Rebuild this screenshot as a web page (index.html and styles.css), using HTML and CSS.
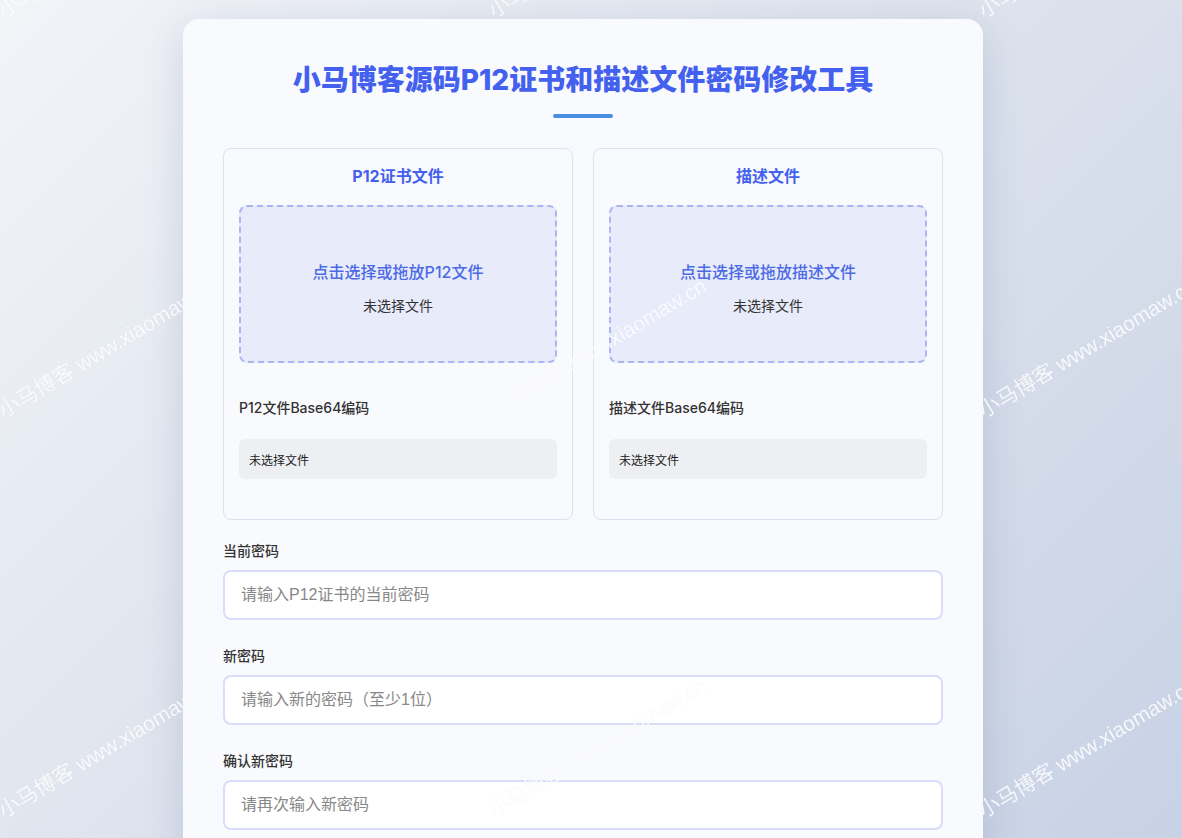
FILE: index.html
```html
<!DOCTYPE html>
<html lang="zh-CN">
<head>
    <meta charset="UTF-8">
    <meta name="viewport" content="width=device-width, initial-scale=1.0">
    <title>小马博客源码P12证书和描述文件密码修改工具</title>
    <link rel="stylesheet" href="styles.css">
</head>
<body>
    <div class="container">
        <h1>小马博客源码P12证书和描述文件密码修改工具</h1>
        <div class="title-bar"></div>

        <div class="file-row">
            <div class="file-card">
                <h3>P12证书文件</h3>
                <label class="drop-zone">
                    <input type="file" accept=".p12">
                    <span class="drop-text">点击选择或拖放P12文件</span>
                    <span class="file-name">未选择文件</span>
                </label>
                <div class="b64-label">P12文件Base64编码</div>
                <div class="b64-box">未选择文件</div>
            </div>
            <div class="file-card">
                <h3>描述文件</h3>
                <label class="drop-zone">
                    <input type="file" accept=".mobileprovision">
                    <span class="drop-text">点击选择或拖放描述文件</span>
                    <span class="file-name">未选择文件</span>
                </label>
                <div class="b64-label">描述文件Base64编码</div>
                <div class="b64-box">未选择文件</div>
            </div>
        </div>

        <div class="form-group">
            <label for="old-pass">当前密码</label>
            <input type="password" id="old-pass" placeholder="请输入P12证书的当前密码">
        </div>
        <div class="form-group">
            <label for="new-pass">新密码</label>
            <input type="password" id="new-pass" placeholder="请输入新的密码（至少1位）">
        </div>
        <div class="form-group">
            <label for="confirm-pass">确认新密码</label>
            <input type="password" id="confirm-pass" placeholder="请再次输入新密码">
        </div>

        <button id="submit-btn">修改密码并下载</button>
        <p id="message"></p>
    </div>

    <div class="watermark">
        <div class="wm-cell"><span>小马博客 www.xiaomaw.cn</span></div>
        <div class="wm-cell"><span>小马博客 www.xiaomaw.cn</span></div>
        <div class="wm-cell"><span>小马博客 www.xiaomaw.cn</span></div>
        <div class="wm-cell"><span>小马博客 www.xiaomaw.cn</span></div>
        <div class="wm-cell"><span>小马博客 www.xiaomaw.cn</span></div>
        <div class="wm-cell"><span>小马博客 www.xiaomaw.cn</span></div>
        <div class="wm-cell"><span>小马博客 www.xiaomaw.cn</span></div>
        <div class="wm-cell"><span>小马博客 www.xiaomaw.cn</span></div>
        <div class="wm-cell"><span>小马博客 www.xiaomaw.cn</span></div>
        <div class="wm-cell"><span>小马博客 www.xiaomaw.cn</span></div>
        <div class="wm-cell"><span>小马博客 www.xiaomaw.cn</span></div>
        <div class="wm-cell"><span>小马博客 www.xiaomaw.cn</span></div>
    </div>
</body>
</html>
```

FILE: styles.css
```css
body {
    font-family: Inter, "Noto Sans CJK SC", sans-serif;
    margin: 0;
    /* leaves room the width of a scrollbar on the right */
    padding: 19px 16px 40px 0;
    color: #333;
    background: linear-gradient(135deg, #f2f4f8 0%, #dfe4ee 45%, #c8d2e5 100%) fixed;
    min-height: 100vh;
}

.container {
    width: 800px;
    box-sizing: border-box;
    margin: 0 auto;
    padding: 40px;
    background: #f9fafd;
    border-radius: 16px;
    box-shadow: 0 10px 40px rgba(60, 80, 130, 0.18);
}

h1 {
    margin: 0;
    font-size: 28px;
    line-height: 42px;
    font-weight: 800;
    text-align: center;
    color: #4361ee;
}

.title-bar {
    width: 60px;
    height: 4px;
    margin: 13px auto 30px;
    background: #4a90e2;
    border-radius: 2px;
}

.file-row {
    display: grid;
    grid-template-columns: 1fr 1fr;
    gap: 20px;
}

.file-card {
    border: 1px solid #dde1f0;
    border-radius: 8px;
    padding: 15px 15px 40px;
    background: #f9fafd;
}

.file-card h3 {
    margin: 0 0 17px;
    font-size: 16px;
    line-height: 24px;
    font-weight: 700;
    text-align: center;
    color: #4361ee;
}

.drop-zone {
    display: flex;
    flex-direction: column;
    align-items: center;
    box-sizing: border-box;
    height: 158px;
    padding-top: 54px;
    border: 2px dashed #aab5f2;
    border-radius: 8px;
    background: #e8ebfa;
    cursor: pointer;
}

.drop-zone input {
    display: none;
}

.drop-text {
    font-size: 16px;
    line-height: 22px;
    font-weight: 500;
    color: #4c6ae6;
}

.file-name {
    margin-top: 12px;
    font-size: 14px;
    line-height: 22px;
    color: #333;
}

.b64-label {
    margin-top: 35px;
    font-size: 14px;
    line-height: 20px;
    font-weight: 500;
    color: #333;
}

.b64-box {
    margin-top: 21px;
    height: 40px;
    box-sizing: border-box;
    padding: 0 10px;
    display: flex;
    align-items: center;
    border-radius: 6px;
    background: #eeeff2;
    font-size: 12px;
    color: #222;
}

.form-group {
    margin-top: 21px;
}

.form-group + .form-group {
    margin-top: 26px;
}

.form-group label {
    display: block;
    margin-bottom: 10px;
    font-size: 14px;
    line-height: 19px;
    font-weight: 500;
    color: #333;
}

.form-group input {
    width: 100%;
    height: 50px;
    box-sizing: border-box;
    padding: 0 16px;
    border: 2px solid #d9ddf9;
    border-radius: 8px;
    background: #fff;
    font-family: "Liberation Sans", "Noto Sans CJK SC", sans-serif;
    font-size: 16px;
    color: #333;
}

.form-group input::placeholder {
    color: #888;
}

.form-group input:focus {
    border-color: #4361ee;
    outline: none;
}

button {
    display: block;
    width: 100%;
    margin-top: 30px;
    padding: 14px;
    border: none;
    border-radius: 8px;
    background: #4361ee;
    color: white;
    font-size: 16px;
    font-family: inherit;
    cursor: pointer;
}

#message {
    margin: 15px 0 0;
    text-align: center;
    font-size: 14px;
}

.watermark {
    position: fixed;
    inset: 0;
    pointer-events: none;
    z-index: 10;
    display: grid;
    grid-template-columns: repeat(3, 490px);
    grid-auto-rows: 400px;
    overflow: hidden;
}

.wm-cell span {
    display: block;
    width: max-content;
    margin-left: 6px;
    font-family: "Liberation Sans", "Noto Sans CJK SC", sans-serif;
    font-size: 21px;
    line-height: 22px;
    color: rgba(255, 255, 255, 0.85);
    text-shadow: 0 0 1px rgba(120, 130, 160, 0.1);
    transform: rotate(-31deg);
    transform-origin: 0 100%;
    white-space: nowrap;
}
```
